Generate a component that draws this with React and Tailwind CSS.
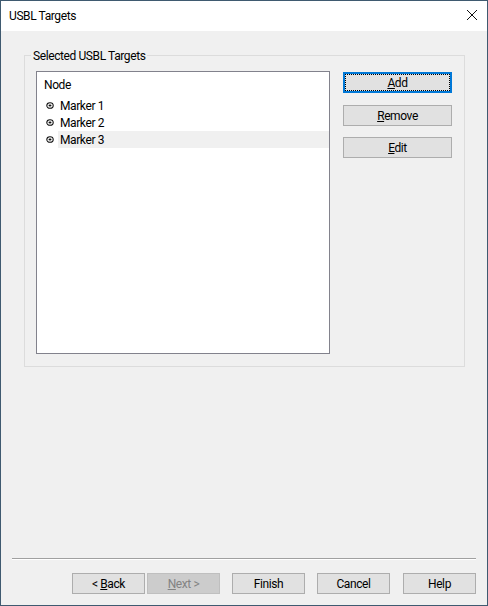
const font = "font-['Roboto',sans-serif]";

function Btn({ children, className = "", disabled = false }) {
  return (
    <div className={`h-[21px] flex items-center justify-center border text-[12px] leading-none ${disabled ? "bg-[#cccccc] border-[#bfbfbf] text-[#838383]" : "bg-[#e1e1e1] border-[#adadad] text-black"} ${className}`}>
      <span>{children}</span>
    </div>
  );
}

function TargetIcon() {
  return (
    <svg width="8" height="7" viewBox="0 0 8 7" className="shrink-0">
      <ellipse cx="4" cy="3.5" rx="3.2" ry="2.8" fill="none" stroke="#111" strokeWidth="1.1" />
      <ellipse cx="4" cy="3.5" rx="1.5" ry="1" fill="#111" />
    </svg>
  );
}

function Row({ label, selected }) {
  return (
    <div className="h-[17px] flex items-center">
      <div className="w-[21px] pl-[9px] flex items-center"><TargetIcon /></div>
      <div className={`flex-1 h-full pl-[2px] flex items-center ${selected ? "bg-[#f0f0f0]" : ""}`}>{label}</div>
    </div>
  );
}

export default function App() {
  return (
    <div className={`w-[488px] h-[606px] flex flex-col bg-[#f0f0f0] border border-[#3f5a70] text-[12px] tracking-[-0.4px] text-black overflow-hidden ${font}`}>
      <div className="h-[30px] bg-white shrink-0 flex items-center justify-between pl-[8px] pr-[10px]">
        <span>USBL Targets</span>
        <svg width="10" height="10" viewBox="0 0 10 10" className="mb-[2px]">
          <path d="M0 0 L10 10 M10 0 L0 10" stroke="#111" strokeWidth="1" fill="none" />
        </svg>
      </div>
      <div className="flex-1 flex flex-col pt-[24px]">
        <div className="relative ml-[23px] mr-[22px] h-[312px] border border-[#dcdcdc] pt-[15px] pl-[11px] pr-[12px] flex gap-[13px]">
          <span className="absolute left-[6px] -top-[8px] bg-[#f0f0f0] px-[2px] leading-[16px]">Selected USBL Targets</span>
          <div className="w-[294px] h-[283px] bg-white border border-[#82828c] pt-[4px] shrink-0">
            <div className="h-[18px] pl-[7px] flex items-center">Node</div>
            <div className="mt-[3px]">
              <Row label="Marker 1" />
              <Row label="Marker 2" />
              <Row label="Marker 3" selected />
            </div>
          </div>
          <div className="flex-1 flex flex-col pt-[1px]">
            <div className="h-[21px] border-2 border-[#0078d7] bg-[#e1e1e1] flex items-center justify-center">
              <div className="w-full h-full flex items-center justify-center border border-dotted border-black leading-none">
                <span><u>A</u>dd</span>
              </div>
            </div>
            <Btn className="mt-[12px]"><u>R</u>emove</Btn>
            <Btn className="mt-[11px]"><u>E</u>dit</Btn>
          </div>
        </div>
        <div className="mx-[11px] mt-[191px] h-[2px] border-t border-[#a0a0a0] bg-white" />
        <div className="mt-[13px] pl-[71px] flex">
          <Btn className="w-[73px]">&lt; <u>B</u>ack</Btn>
          <Btn className="w-[73px] ml-[2px]" disabled><u>N</u>ext &gt;</Btn>
          <Btn className="w-[73px] ml-[12px]">Finish</Btn>
          <Btn className="w-[73px] ml-[12px]">Cancel</Btn>
          <Btn className="w-[73px] ml-[13px]">Help</Btn>
        </div>
      </div>
    </div>
  );
}
